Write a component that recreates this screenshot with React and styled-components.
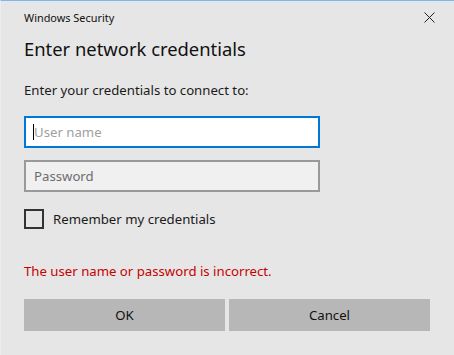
import React from 'react';
import styled, { createGlobalStyle } from 'styled-components';

const GlobalStyle = createGlobalStyle`
  html, body {
    margin: 0;
    padding: 0;
    background: #e6e6e6;
  }
`;

const Dialog = styled.div`
  box-sizing: border-box;
  width: 454px;
  height: 355px;
  background: #e6e6e6;
  border-top: 1px solid #7ab9ed;
  border-left: 1px solid #ededed;
  font-family: "Noto Sans", "Open Sans", sans-serif;
  color: #1a1a1a;
  display: flex;
  flex-direction: column;
  padding: 0 24px 0 23px;
`;

const TitleBar = styled.div`
  display: flex;
  justify-content: space-between;
  align-items: center;
  height: 32px;
  font-size: 10.9px;
  color: #111;
`;

const Close = styled.button`
  border: none;
  background: none;
  padding: 0;
  margin-right: -10px;
  width: 22px;
  height: 22px;
  display: flex;
  align-items: center;
  justify-content: center;
  cursor: pointer;
`;

const Heading = styled.h1`
  margin: 2px 0 0;
  font-size: 18.4px;
  font-weight: 400;
  line-height: 28px;
  color: #111;
`;

const Prompt = styled.p`
  margin: 17px 0 0;
  font-size: 13.2px;
  line-height: 20px;
`;

const FieldWrap = styled.div`
  position: relative;
  margin-top: ${({ first }) => (first ? '16px' : '12px')};
`;

const Field = styled.input`
  display: block;
  box-sizing: border-box;
  width: 296px;
  height: 32px;
  padding: 0 8px;
  font-family: inherit;
  font-size: 13.2px;
  color: #111;
  outline: none;
  border: 2px solid ${({ focused }) => (focused ? '#0078d7' : '#999')};
  background: ${({ focused }) => (focused ? '#fff' : '#f0f0f0')};
  caret-color: #000;

  &::placeholder {
    color: ${({ focused }) => (focused ? '#a0a0a0' : '#6d6d6d')};
  }
`;

const Caret = styled.span`
  position: absolute;
  left: 9px;
  top: 8px;
  width: 1px;
  height: 16px;
  background: #000;
`;

const CheckRow = styled.label`
  display: flex;
  align-items: center;
  gap: 9px;
  margin-top: 17px;
  font-size: 13.2px;
  cursor: pointer;
`;

const Box = styled.span`
  box-sizing: border-box;
  width: 20px;
  height: 20px;
  border: 2px solid #333;
`;

const ErrorText = styled.p`
  margin: 32px 0 0;
  font-size: 13.2px;
  line-height: 20px;
  color: #c70000;
`;

const Buttons = styled.div`
  display: grid;
  grid-template-columns: 1fr 1fr;
  gap: 4px;
  width: 406px;
  margin-top: 18px;
`;

const Button = styled.button`
  height: 32px;
  border: none;
  background: #b7b7b7;
  font-family: inherit;
  font-size: 13.2px;
  color: #111;
  cursor: pointer;
`;

export default function App() {
  return (
    <Dialog>
      <GlobalStyle />
      <TitleBar>
        <span>Windows Security</span>
        <Close aria-label="Close">
          <svg width="11" height="11" viewBox="0 0 11 11">
            <path d="M0.5 0.5 L10.5 10.5 M10.5 0.5 L0.5 10.5" stroke="#222" strokeWidth="1" />
          </svg>
        </Close>
      </TitleBar>
      <Heading>Enter network credentials</Heading>
      <Prompt>Enter your credentials to connect to:</Prompt>
      <FieldWrap first>
        <Field focused placeholder="User name" />
        <Caret />
      </FieldWrap>
      <FieldWrap>
        <Field type="password" placeholder="Password" />
      </FieldWrap>
      <CheckRow>
        <Box />
        Remember my credentials
      </CheckRow>
      <ErrorText>The user name or password is incorrect.</ErrorText>
      <Buttons>
        <Button>OK</Button>
        <Button>Cancel</Button>
      </Buttons>
    </Dialog>
  );
}
